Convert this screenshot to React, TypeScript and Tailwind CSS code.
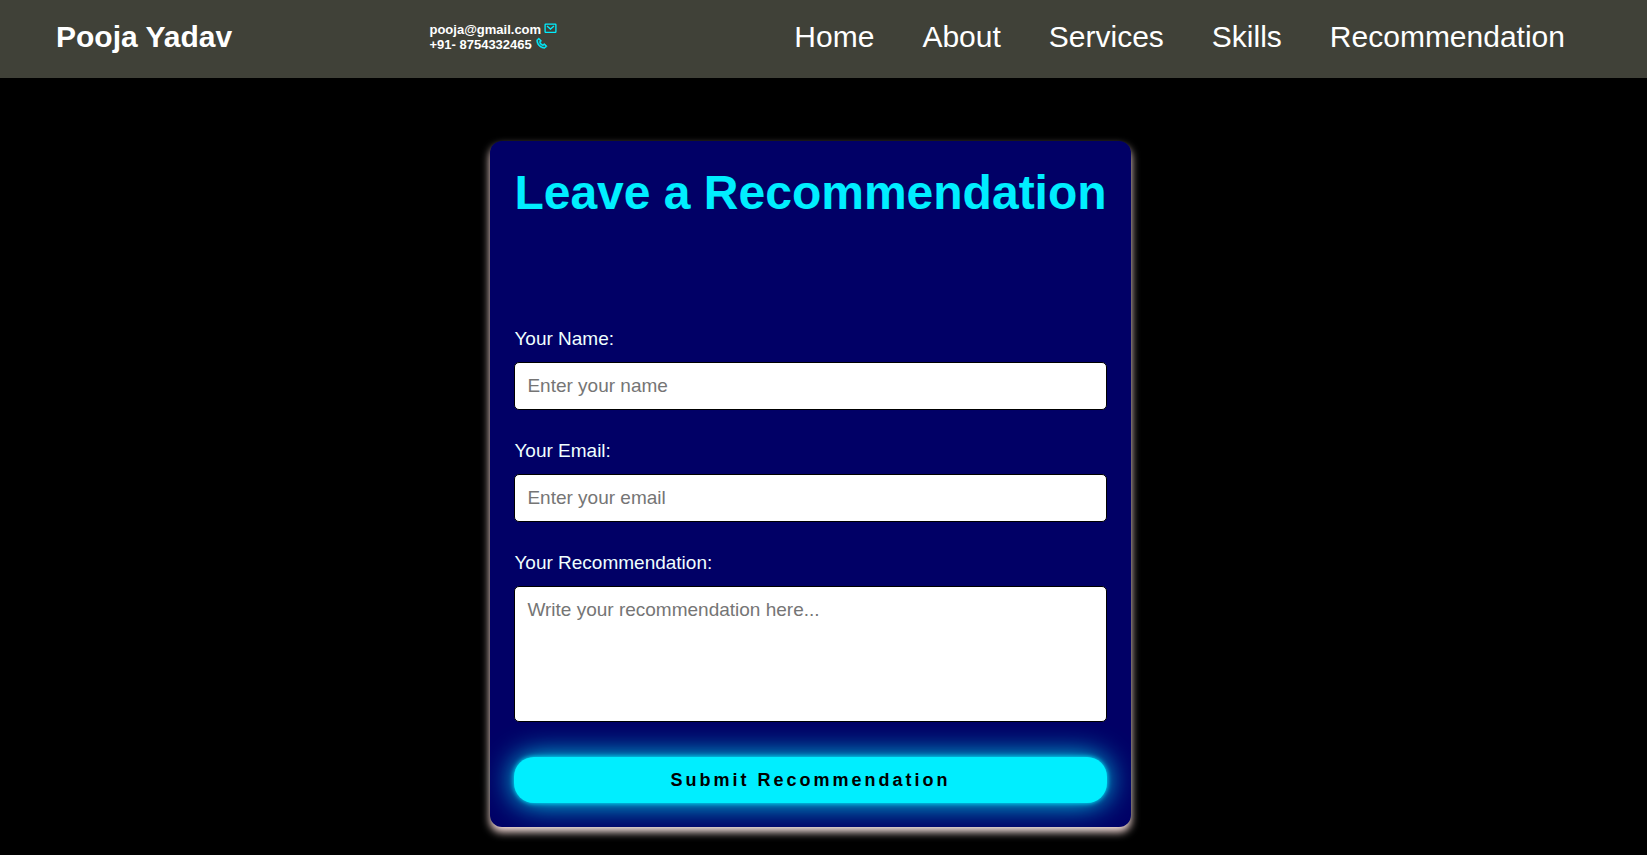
import { BiPhone } from "react-icons/bi";

const links = ["Home", "About", "Services", "Skills", "Recommendation"];

const fieldClass =
  "block w-full rounded-[5px] border border-black bg-white p-3 text-[19px] leading-[22px] text-black placeholder:text-[#757575]";
const labelClass = "mb-3 block text-[19px] leading-[22px] text-[#f0ffff]";

function EnvelopeIcon() {
  return (
    <svg
      viewBox="0 0 13 13"
      aria-hidden="true"
      className="mb-0.5 size-[13px] fill-none stroke-[#00eeff]"
      strokeWidth="1.3"
    >
      <rect x="1.1" y="2.1" width="10.8" height="8.3" rx="0.6" />
      <path d="M3 4.1 6.5 7.1 10 4.1" />
    </svg>
  );
}

function Header() {
  return (
    <header className="flex h-[78px] items-start justify-between bg-[#404138] pt-5 pr-[82px] pl-14 text-white">
      <div className="text-[30px] leading-[34px] font-bold">Pooja Yadav</div>
      <address className="pt-0.5 text-[13px] leading-[15px] font-bold not-italic">
        <div className="flex items-center gap-[3px]">
          pooja@gmail.com <EnvelopeIcon />
        </div>
        <div className="flex items-center gap-[3px]">
          +91- 8754332465{" "}
          <BiPhone className="mb-0.5 size-[13px] stroke-[#00eeff] stroke-1 text-[#00eeff]" />
        </div>
      </address>
      <nav className="pl-10">
        <ul className="flex gap-12 text-[30px] leading-[34px]">
          {links.map((link) => (
            <li key={link}>
              <a href={`#${link.toLowerCase()}`}>{link}</a>
            </li>
          ))}
        </ul>
      </nav>
    </header>
  );
}

export default function App() {
  return (
    <div className="min-h-screen bg-black font-['Liberation_Sans',Arial,sans-serif]">
      <Header />
      <main className="flex justify-center pt-[63px] pr-[26px] pb-7">
        <form
          onSubmit={(e) => e.preventDefault()}
          className="rounded-xl bg-[#010066] p-6 shadow-[0_5px_8px_#ffe4e1]"
        >
          <h1 className="mb-[107px] text-5xl leading-[56px] font-bold text-[#00eeff]">
            Leave a Recommendation
          </h1>
          <div className="mb-[30px]">
            <label htmlFor="name" className={labelClass}>
              Your Name:
            </label>
            <input id="name" type="text" placeholder="Enter your name" className={fieldClass} />
          </div>
          <div className="mb-[30px]">
            <label htmlFor="email" className={labelClass}>
              Your Email:
            </label>
            <input id="email" type="email" placeholder="Enter your email" className={fieldClass} />
          </div>
          <div className="mb-[35px]">
            <label htmlFor="message" className={labelClass}>
              Your Recommendation:
            </label>
            <textarea
              id="message"
              rows={5}
              placeholder="Write your recommendation here..."
              className={`${fieldClass} resize-none`}
            />
          </div>
          <button
            type="submit"
            className="block w-full rounded-[20px] bg-[#00eeff] py-3 text-[18px] leading-[22px] font-bold tracking-[3px] text-black shadow-[0_0_5px_#00eeff,0_0_30px_#00eeff]"
          >
            Submit Recommendation
          </button>
        </form>
      </main>
    </div>
  );
}
